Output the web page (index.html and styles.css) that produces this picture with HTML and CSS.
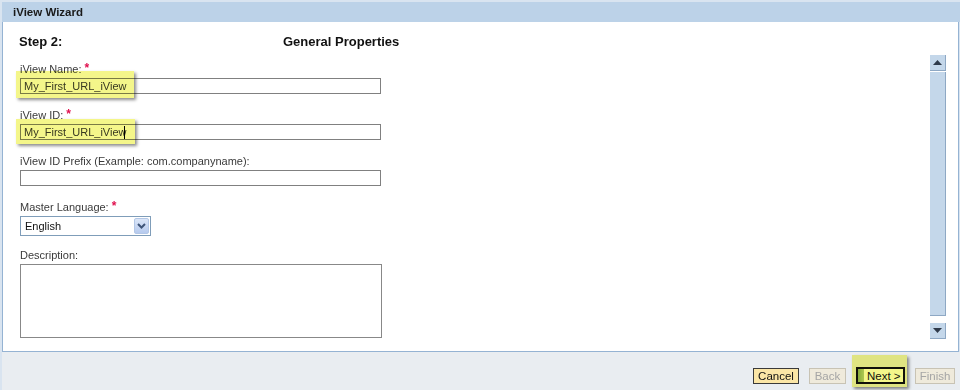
FILE: index.html
```html
<!DOCTYPE html>
<html lang="en">
<head>
    <meta charset="UTF-8">
    <title>iView Wizard</title>
<link rel="stylesheet" href="styles.css">
</head>
<body>
    <div class="wizard">
        <div class="title-bar">iView Wizard</div>

        <div class="panel">
            <div class="form">
                <div class="step-row">
                    <span class="step-no">Step 2:</span>
                    <span class="step-name">General Properties</span>
                </div>

                <!-- iView name -->
                <div class="field">
                    <label class="field-label">iView Name: <span class="req">*</span></label>
                    <div class="field-box">
                        <input class="text-input" type="text" value="My_First_URL_iView">
                        <div class="marker marker-name"></div>
                    </div>
                </div>

                <!-- iView id -->
                <div class="field">
                    <label class="field-label">iView ID: <span class="req">*</span></label>
                    <div class="field-box">
                        <input class="text-input" type="text" value="My_First_URL_iView">
                        <span class="caret"></span>
                        <div class="marker marker-id"></div>
                    </div>
                </div>

                <div class="field">
                    <label class="field-label">iView ID Prefix (Example: com.companyname):</label>
                    <div class="field-box">
                        <input class="text-input" type="text" value="">
                    </div>
                </div>

                <div class="field field-lang">
                    <label class="field-label">Master Language: <span class="req">*</span></label>
                    <div class="combo">
                        <span class="combo-value">English</span>
                        <span class="combo-btn">
                            <svg width="9" height="6" viewBox="0 0 9 6">
                                <path d="M1 1 L4.5 4.5 L8 1" fill="none" stroke="#3f5579" stroke-width="2"/>
                            </svg>
                        </span>
                    </div>
                </div>

                <div class="field">
                    <label class="field-label">Description:</label>
                    <textarea class="text-area"></textarea>
                </div>
            </div>

            <div class="scroll">
                <div class="scroll-btn">
                    <svg width="9" height="5" viewBox="0 0 9 5"><path d="M0 5 L4.5 0 L9 5 Z" fill="#2f3a4a"/></svg>
                </div>
                <div class="scroll-thumb"></div>
                <div class="scroll-btn scroll-down">
                    <svg width="9" height="5" viewBox="0 0 9 5"><path d="M0 0 L9 0 L4.5 5 Z" fill="#2f3a4a"/></svg>
                </div>
            </div>
        </div>

        <div class="footer">
            <button class="btn btn-cancel">Cancel</button>
            <button class="btn btn-off btn-back">Back</button>
            <div class="next-wrap">
                <button class="btn btn-next"><span class="next-grip"></span>Next &gt;</button>
                <div class="marker marker-next"></div>
            </div>
            <button class="btn btn-off btn-finish">Finish</button>
        </div>
    </div>
</body>
</html>
```

FILE: styles.css
```css
body {
    margin: 0;
    background: #d9e4f0;
    font-family: 'Liberation Sans', Arial, sans-serif;
    font-size: 11px;
    color: #333;
}

.wizard {
    width: 958px;
    height: 388px;
    margin: 2px 0 0 2px;
    display: flex;
    flex-direction: column;
}

.title-bar {
    height: 20px;
    line-height: 20px;
    background: #bcd2e8;
    padding-left: 11px;
    font-size: 11.5px;
    font-weight: bold;
    color: #1a1a1a;
}

.panel {
    height: 329px;
    width: 955px;
    background: white;
    border: 1px solid #95b3d3;
    border-top: none;
    display: flex;
}

.form {
    flex: 1;
    padding: 12px 0 0 17px;
}

.step-row {
    display: flex;
    height: 16px;
    line-height: 16px;
    margin-left: -1px;
    margin-bottom: 12px;
    font-size: 13px;
    font-weight: bold;
    color: #111;
}

.step-no {
    width: 264px;
}

.field {
    margin-bottom: 14px;
}

.field-lang {
    margin-bottom: 12px;
}

.field-label {
    display: block;
    height: 14px;
    line-height: 14px;
    margin-bottom: 2px;
    color: #3a3a3a;
}

.req {
    color: #e0104e;
    font-size: 12px;
    font-weight: bold;
    position: relative;
    top: -1px;
}

.field-box {
    position: relative;
    width: 361px;
}

.text-input {
    display: block;
    box-sizing: border-box;
    width: 361px;
    height: 16px;
    margin: 0;
    padding: 0 3px;
    border: 1px solid #808080;
    background: white;
    font-family: 'Liberation Sans', Arial, sans-serif;
    font-size: 11px;
    color: #3a3a3a;
}

.caret {
    position: absolute;
    left: 104px;
    top: 2px;
    width: 1px;
    height: 13px;
    background: #000;
}

/* yellow highlight marks drawn over the page */
.marker {
    position: absolute;
    background: #f4f68a;
    mix-blend-mode: multiply;
    box-shadow: 2px 2px 3px rgba(0,0,0,0.45);
}

.marker-name {
    left: -4px;
    top: -7px;
    width: 118px;
    height: 27px;
}

.marker-id {
    left: -4px;
    top: -5px;
    width: 119px;
    height: 25px;
}

.combo {
    box-sizing: border-box;
    width: 131px;
    height: 20px;
    border: 1px solid #7f9db9;
    display: flex;
    align-items: center;
    justify-content: space-between;
    padding: 0 1px 0 4px;
    color: #111;
}

.combo-btn {
    width: 15px;
    height: 16px;
    box-sizing: border-box;
    border: 1px solid #b3c7e6;
    border-radius: 2px;
    background: linear-gradient(#dbe6f8, #b6caee);
    display: flex;
    align-items: center;
    justify-content: center;
}

.text-area {
    display: block;
    box-sizing: border-box;
    width: 362px;
    height: 74px;
    margin: 0;
    border: 1px solid #888;
    resize: none;
}

.scroll {
    width: 16px;
    margin: 33px 12px 0 0;
    display: flex;
    flex-direction: column;
}

.scroll-btn {
    box-sizing: border-box;
    height: 16px;
    background: #c4d7ea;
    border-right: 1px solid #8ea8c4;
    border-bottom: 1px solid #8ea8c4;
    display: flex;
    align-items: center;
    justify-content: center;
}

.scroll-thumb {
    box-sizing: border-box;
    height: 244px;
    margin-top: 1px;
    background: #c4d7ea;
    border-right: 1px solid #8ea8c4;
    border-bottom: 1px solid #8ea8c4;
}

.scroll-down {
    margin-top: 7px;
}

.footer {
    flex: 1;
    background: #e9edf1;
    display: flex;
    justify-content: flex-end;
    align-items: flex-start;
    gap: 10px;
    padding: 16px 5px 0 0;
}

.btn {
    box-sizing: border-box;
    height: 16px;
    margin: 0;
    padding: 0;
    font-family: 'Liberation Sans', Arial, sans-serif;
    font-size: 11.5px;
    line-height: 14px;
    white-space: nowrap;
    cursor: pointer;
}

.btn-cancel {
    width: 46px;
    background: #fbe6a6;
    border: 1px solid #3a3a3a;
    color: #111;
}

.btn-off {
    background: #efeadb;
    border: 1px solid #c8c3b4;
    color: #a5a5a5;
    cursor: default;
}

.btn-back {
    width: 37px;
}

.btn-finish {
    width: 40px;
}

.next-wrap {
    position: relative;
    margin-top: -1px;
}

.btn-next {
    width: 49px;
    display: flex;
    align-items: center;
    line-height: 12px;
    height: 17px;
    background: white;
    border: 2px solid #111;
    color: #111;
}

.next-grip {
    width: 6px;
    align-self: stretch;
    background: linear-gradient(90deg, #8fb26d, #b5cf96);
    margin-right: 3px;
}

.marker-next {
    left: -4px;
    top: -12px;
    width: 55px;
    height: 32px;
}
```
